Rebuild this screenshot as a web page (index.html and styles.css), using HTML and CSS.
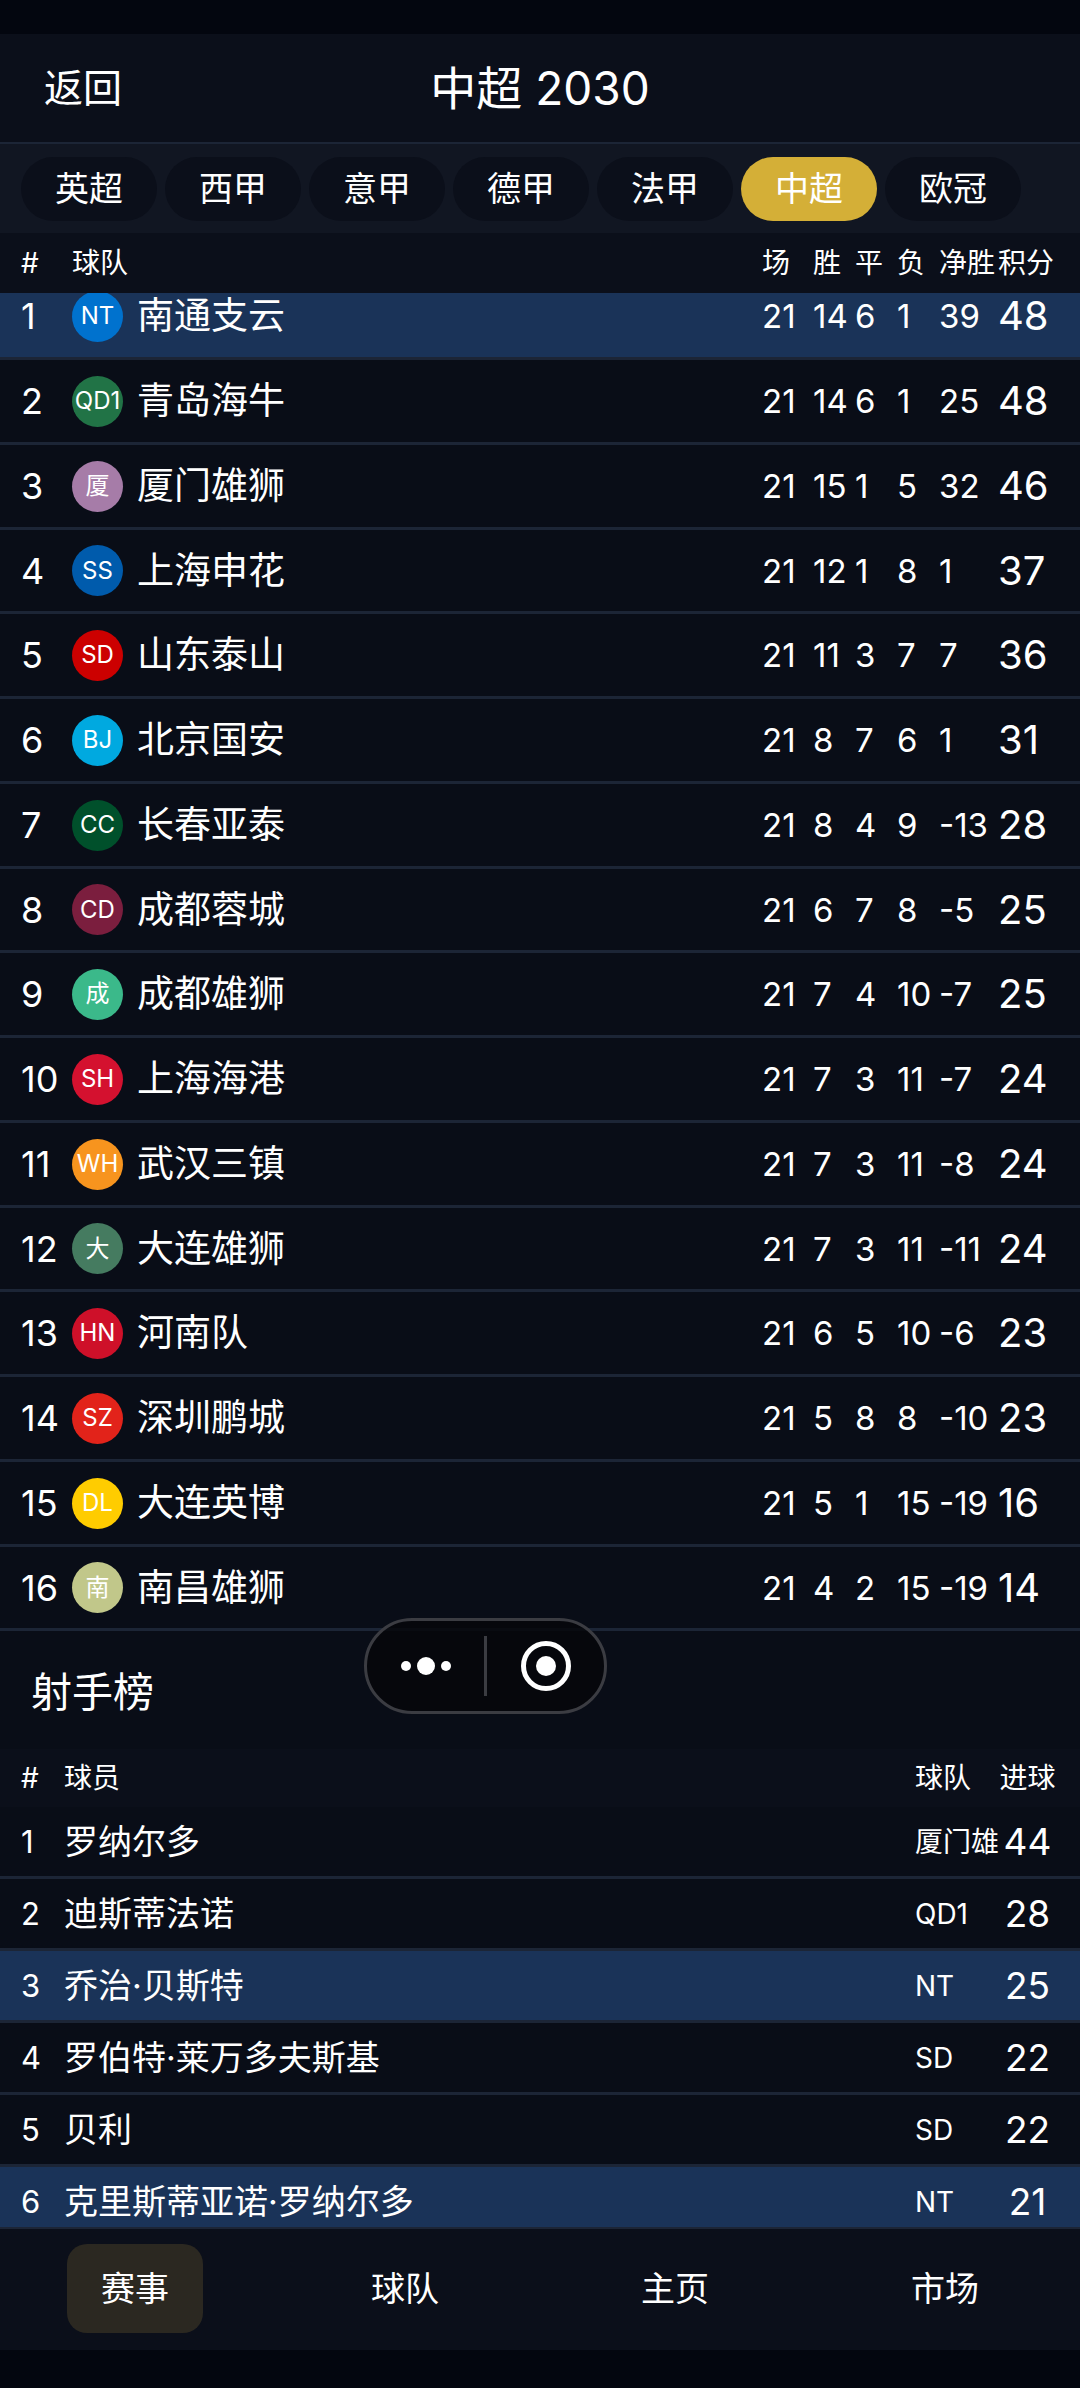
FILE: index.html
```html
<!DOCTYPE html>
<html lang="zh-CN">
  <head>
    <meta charset="UTF-8">
    <meta name="viewport" content="width=device-width, initial-scale=1.0">
    <title>中超 2030</title>
    <link rel="stylesheet" href="styles.css">
  </head>
  <body>
    <header class="header">
        <button class="back-button" type="button">返回</button>
        <h1 class="title">中超 2030</h1>
    </header>

    <div class="league-tabs">
        <button class="league-tab" type="button">英超</button>
        <button class="league-tab" type="button">西甲</button>
        <button class="league-tab" type="button">意甲</button>
        <button class="league-tab" type="button">德甲</button>
        <button class="league-tab" type="button">法甲</button>
        <button class="league-tab active" type="button">中超</button>
        <button class="league-tab" type="button">欧冠</button>
    </div>

    <main class="content" id="content">
        <table class="standings">
            <thead>
                <tr>
                    <th class="col-rank">#</th>
                    <th>球队</th>
                    <th class="col-played">场</th>
                    <th class="col-stat">胜</th>
                    <th class="col-stat">平</th>
                    <th class="col-stat">负</th>
                    <th class="col-diff">净胜</th>
                    <th class="col-points">积分</th>
                </tr>
            </thead>
            <tbody>
                <tr class="mine"><td>1</td><td><div class="team"><span class="badge nt">NT</span>南通支云</div></td><td>21</td><td>14</td><td>6</td><td>1</td><td>39</td><td>48</td></tr>
                <tr><td>2</td><td><div class="team"><span class="badge qd">QD1</span>青岛海牛</div></td><td>21</td><td>14</td><td>6</td><td>1</td><td>25</td><td>48</td></tr>
                <tr><td>3</td><td><div class="team"><span class="badge xm">厦</span>厦门雄狮</div></td><td>21</td><td>15</td><td>1</td><td>5</td><td>32</td><td>46</td></tr>
                <tr><td>4</td><td><div class="team"><span class="badge ss">SS</span>上海申花</div></td><td>21</td><td>12</td><td>1</td><td>8</td><td>1</td><td>37</td></tr>
                <tr><td>5</td><td><div class="team"><span class="badge sd">SD</span>山东泰山</div></td><td>21</td><td>11</td><td>3</td><td>7</td><td>7</td><td>36</td></tr>
                <tr><td>6</td><td><div class="team"><span class="badge bj">BJ</span>北京国安</div></td><td>21</td><td>8</td><td>7</td><td>6</td><td>1</td><td>31</td></tr>
                <tr><td>7</td><td><div class="team"><span class="badge cc">CC</span>长春亚泰</div></td><td>21</td><td>8</td><td>4</td><td>9</td><td>-13</td><td>28</td></tr>
                <tr><td>8</td><td><div class="team"><span class="badge cd">CD</span>成都蓉城</div></td><td>21</td><td>6</td><td>7</td><td>8</td><td>-5</td><td>25</td></tr>
                <tr><td>9</td><td><div class="team"><span class="badge cdx">成</span>成都雄狮</div></td><td>21</td><td>7</td><td>4</td><td>10</td><td>-7</td><td>25</td></tr>
                <tr><td>10</td><td><div class="team"><span class="badge sh">SH</span>上海海港</div></td><td>21</td><td>7</td><td>3</td><td>11</td><td>-7</td><td>24</td></tr>
                <tr><td>11</td><td><div class="team"><span class="badge wh">WH</span>武汉三镇</div></td><td>21</td><td>7</td><td>3</td><td>11</td><td>-8</td><td>24</td></tr>
                <tr><td>12</td><td><div class="team"><span class="badge dlx">大</span>大连雄狮</div></td><td>21</td><td>7</td><td>3</td><td>11</td><td>-11</td><td>24</td></tr>
                <tr><td>13</td><td><div class="team"><span class="badge hn">HN</span>河南队</div></td><td>21</td><td>6</td><td>5</td><td>10</td><td>-6</td><td>23</td></tr>
                <tr><td>14</td><td><div class="team"><span class="badge sz">SZ</span>深圳鹏城</div></td><td>21</td><td>5</td><td>8</td><td>8</td><td>-10</td><td>23</td></tr>
                <tr><td>15</td><td><div class="team"><span class="badge dl">DL</span>大连英博</div></td><td>21</td><td>5</td><td>1</td><td>15</td><td>-19</td><td>16</td></tr>
                <tr><td>16</td><td><div class="team"><span class="badge nc">南</span>南昌雄狮</div></td><td>21</td><td>4</td><td>2</td><td>15</td><td>-19</td><td>14</td></tr>
            </tbody>
        </table>

        <h2 class="section-title">射手榜</h2>

        <table class="scorers">
            <thead>
                <tr>
                    <th class="col-rank">#</th>
                    <th>球员</th>
                    <th class="col-team">球队</th>
                    <th class="col-goals">进球</th>
                </tr>
            </thead>
            <tbody>
                <tr><td>1</td><td>罗纳尔多</td><td>厦门雄</td><td>44</td></tr>
                <tr><td>2</td><td>迪斯蒂法诺</td><td>QD1</td><td>28</td></tr>
                <tr class="mine"><td>3</td><td>乔治·贝斯特</td><td>NT</td><td>25</td></tr>
                <tr><td>4</td><td>罗伯特·莱万多夫斯基</td><td>SD</td><td>22</td></tr>
                <tr><td>5</td><td>贝利</td><td>SD</td><td>22</td></tr>
                <tr class="mine"><td>6</td><td>克里斯蒂亚诺·罗纳尔多</td><td>NT</td><td>21</td></tr>
            </tbody>
        </table>
    </main>

    <nav class="bottom-nav">
        <a class="nav-item active" href="#">赛事</a>
        <a class="nav-item" href="#">球队</a>
        <a class="nav-item" href="#">主页</a>
        <a class="nav-item" href="#">市场</a>
    </nav>

    <div class="capsule">
        <button class="capsule-button" type="button" aria-label="更多">
            <svg width="50" height="18" viewBox="0 0 50 18" fill="#fff">
                <circle cx="5" cy="9" r="5"/>
                <circle cx="25" cy="9" r="9"/>
                <circle cx="45" cy="9" r="5"/>
            </svg>
        </button>
        <span class="capsule-divider"></span>
        <button class="capsule-button" type="button" aria-label="关闭">
            <svg width="50" height="50" viewBox="0 0 50 50">
                <circle cx="25" cy="25" r="22.5" fill="none" stroke="#fff" stroke-width="5"/>
                <circle cx="25" cy="25" r="10" fill="#fff"/>
            </svg>
        </button>
    </div>

    <script>
        // start slightly scrolled, the table head stays pinned
        document.getElementById('content').scrollTop = 18;
    </script>
  </body>
</html>
```
FILE: styles.css
```css
:root {
    --bg-body: #03060f;
    --bg-bar: #0b0f1a;
    --bg-tabs: #111622;
    --bg-row: #090d17;
    --bg-mine: #1a3358;
    --border-color: #1c2536;
    --gold: #d4af37;
    --text-primary: #fff;
}

* {
    box-sizing: border-box;
}

body {
    font-family: 'Inter', 'Noto Sans CJK SC', sans-serif;
    margin: 0;
    padding: 34px 0 38px;
    height: 100vh;
    display: flex;
    flex-direction: column;
    background: var(--bg-body);
    color: var(--text-primary);
}

button {
    font-family: inherit;
    color: inherit;
    border: none;
    background: none;
    padding: 0;
    cursor: pointer;
}

.header {
    flex: none;
    display: grid;
    grid-template-columns: 1fr auto 1fr;
    align-items: center;
    height: 110px;
    padding: 0 44px;
    background: var(--bg-bar);
    border-bottom: 2px solid var(--border-color);
}

.back-button {
    justify-self: start;
    font-size: 39px;
    line-height: 56px;
}

.title {
    margin: 0;
    font-size: 46px;
    line-height: 64px;
    font-weight: 400;
}

.league-tabs {
    flex: none;
    display: flex;
    gap: 8px;
    padding: 13px 21px 12px;
    background: var(--bg-tabs);
    overflow-x: auto;
    scrollbar-width: none;
}

.league-tab {
    flex: none;
    height: 64px;
    padding: 0 34px;
    border-radius: 32px;
    background: var(--bg-bar);
    font-size: 34px;
    line-height: 64px;
}

.league-tab.active {
    background: var(--gold);
}

.content {
    flex: 1;
    min-height: 0;
    overflow-y: auto;
    scrollbar-width: none;
    padding-bottom: 40px;
    background: var(--bg-row);
}

table {
    width: 100%;
    table-layout: fixed;
    border-spacing: 0;
}

th,
td {
    padding: 0;
    text-align: left;
    font-weight: 400;
    white-space: nowrap;
}

th {
    background: var(--bg-bar);
    font-size: 28px;
    line-height: 40px;
}

td {
    border-bottom: 3px solid var(--border-color);
}

th:first-child,
td:first-child {
    padding-left: 21px;
}

.mine td {
    background: var(--bg-mine);
}

/* standings */
.standings thead {
    position: sticky;
    top: 0;
    z-index: 1;
}

.standings th {
    height: 60px;
}

.standings .col-rank {
    width: 72px;
}

.col-played {
    width: 51px;
}

.col-stat {
    width: 42px;
}

.col-diff {
    width: 59px;
}

.col-points {
    width: 82px;
}

.standings td {
    height: 85px;
    font-size: 33px;
    line-height: 48px;
}

.standings tr:nth-child(4n) td {
    height: 84px;
}

.standings td:first-child {
    font-size: 36px;
}

.standings td:last-child {
    font-size: 40px;
}

.team {
    display: flex;
    align-items: center;
    gap: 14px;
    font-size: 37px;
}

.badge {
    flex: none;
    display: flex;
    align-items: center;
    justify-content: center;
    width: 51px;
    height: 51px;
    border-radius: 50%;
    font-size: 24px;
}

.nt { background: #0072ce; }
.qd { background: #217346; }
.xm { background: #a67ca8; }
.ss { background: #005bac; }
.sd { background: #cc0000; }
.bj { background: #00a9e0; }
.cc { background: #00502b; }
.cd { background: #7b1e3e; }
.cdx { background: #3bb98a; }
.sh { background: #d4112f; }
.wh { background: #f7941e; }
.dlx { background: #457b60; }
.hn { background: #ce1029; }
.sz { background: #e2231a; }
.dl { background: #ffcc00; }
.nc { background: #c1c78a; }

.section-title {
    margin: 0;
    padding: 31px 31px 27px;
    font-size: 41px;
    line-height: 60px;
    font-weight: 400;
}

/* scorers */
.scorers th {
    height: 58px;
}

.scorers .col-rank {
    width: 64px;
}

.col-team {
    width: 84px;
}

.col-goals {
    width: 81px;
}

.scorers th:last-child,
.scorers td:last-child {
    padding-right: 24px;
    text-align: center;
}

.scorers td {
    height: 72px;
    font-size: 34px;
    line-height: 48px;
}

.scorers td:first-child {
    font-size: 31px;
}

.scorers td:nth-child(3) {
    font-size: 28px;
}

.scorers td:last-child {
    font-size: 37px;
}

.bottom-nav {
    flex: none;
    display: grid;
    grid-template-columns: repeat(4, 1fr);
    justify-items: center;
    padding: 15px 0 17px;
    background: var(--bg-bar);
    border-top: 2px solid var(--border-color);
}

.nav-item {
    padding: 0 34px;
    border-radius: 20px;
    color: inherit;
    text-decoration: none;
    font-size: 34px;
    line-height: 89px;
}

.nav-item.active {
    background: #2b2821;
}

/* floating mini-program capsule */
.capsule {
    position: fixed;
    top: 1618px;
    left: 364px;
    z-index: 2;
    display: flex;
    align-items: center;
    width: 243px;
    height: 96px;
    border: 3px solid #3b3c42;
    border-radius: 48px;
    background: rgba(6, 7, 11, 0.85);
}

.capsule-button {
    flex: 1;
    height: 100%;
    display: flex;
    align-items: center;
    justify-content: center;
}

.capsule-divider {
    width: 3px;
    height: 60px;
    background: #3b3c42;
}
```
